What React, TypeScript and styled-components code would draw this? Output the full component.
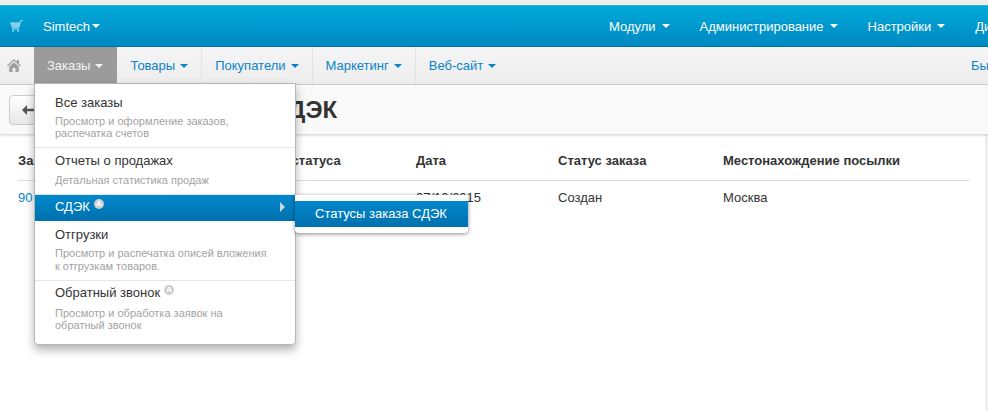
import styled, { createGlobalStyle } from "styled-components";

const GlobalStyle = createGlobalStyle`
  html, body {
    margin: 0;
    height: 100%;
    overflow: hidden;
    background: #ffffff;
  }
  body {
    font-family: "Liberation Sans", Arial, sans-serif;
    font-size: 13px;
    color: #333333;
  }
`;

const Page = styled.div`
  width: 988px;
  height: 411px;
  overflow: hidden;
  position: relative;
  padding-top: 5px;
  box-sizing: border-box;
  display: flex;
  flex-direction: column;
  background: linear-gradient(#f1efed 5px, #ffffff 5px);
`;

const TopBar = styled.div`
  height: 42px;
  flex: none;
  display: flex;
  align-items: center;
  justify-content: space-between;
  background: linear-gradient(#00a9d9, #0089c3);
  border-top: 1px solid #3bb0d0;
  border-bottom: 1px solid #00719f;
  box-sizing: border-box;
  white-space: nowrap;
`;

const TopLeft = styled.div`
  display: flex;
  align-items: center;
  padding-left: 10px;
`;

const TopRight = styled.div`
  display: flex;
  align-items: center;
  gap: 30px;
  width: 379px;
  flex: none;
  overflow: hidden;
`;

const TopLink = styled.span<{ $gap?: number }>`
  color: #ffffff;
  font-size: 13px;
  display: inline-flex;
  align-items: center;
  gap: ${(p) => p.$gap ?? 6}px;
  text-shadow: 0 -1px 0 rgba(0, 0, 0, 0.1);
`;

const Brand = styled(TopLink)`
  margin-left: 20px;
`;

const Caret = styled.i<{ $color?: string }>`
  display: inline-block;
  width: 0;
  height: 0;
  border-left: 4px solid transparent;
  border-right: 4px solid transparent;
  border-top: 4px solid ${(p) => p.$color ?? "#ffffff"};
`;

const SubBar = styled.div`
  height: 38px;
  flex: none;
  display: flex;
  align-items: stretch;
  background: linear-gradient(#f5f5f5, #ededed);
  border-bottom: 1px solid #d5d5d5;
  box-sizing: border-box;
  white-space: nowrap;
`;

const HomeCell = styled.div`
  width: 34px;
  flex: none;
  display: flex;
  align-items: center;
  padding-left: 7px;
  box-sizing: border-box;
`;

const SubItem = styled.div<{ $active?: boolean }>`
  display: flex;
  align-items: center;
  gap: 5px;
  padding: 0 13px;
  font-size: 13px;
  color: ${(p) => (p.$active ? "#f4f4f4" : "#0b84c7")};
  background: ${(p) => (p.$active ? "#9b9b9b" : "transparent")};
  border-right: 1px solid ${(p) => (p.$active ? "#9b9b9b" : "#e2e2e2")};
  height: 37px;

  &:nth-last-child(2) {
    border-right-color: transparent;
  }
`;

const SubRight = styled.div`
  margin-left: auto;
  width: 17px;
  overflow: hidden;
  display: flex;
  align-items: center;
  color: #0b84c7;
  font-size: 13px;
`;

const TitleBar = styled.div`
  height: 49px;
  flex: none;
  display: flex;
  align-items: center;
  background: #f9f9f9;
  box-shadow: 0 1px 3px rgba(0, 0, 0, 0.22);
  padding-left: 9px;
  position: relative;
  white-space: nowrap;
`;

const BackButton = styled.div`
  width: 50px;
  height: 30px;
  margin-top: 1px;
  border: 1px solid #cccccc;
  border-radius: 4px;
  background: linear-gradient(#ffffff, #e8e8e8);
  display: flex;
  align-items: center;
  padding-left: 12px;
  box-sizing: border-box;
`;

const Title = styled.h1`
  margin: 0 0 0 22px;
  font-size: 24px;
  font-weight: 700;
  color: #333333;
  line-height: 30px;
`;

const Content = styled.div`
  flex: 1;
  padding: 17px 15px 0 18px;
  border-right: 3px solid #f0f0f0;
`;

const Table = styled.div`
  display: grid;
  grid-template-columns: 246px 152px 142px 165px 1fr;
`;

const HeadCell = styled.div`
  height: 29px;
  font-size: 13px;
  font-weight: 700;
  line-height: 20px;
  border-bottom: 1px solid #dddddd;
  color: #333333;
  white-space: nowrap;
`;

const Cell = styled.div<{ $link?: boolean }>`
  padding-top: 8px;
  font-size: 13px;
  line-height: 18px;
  color: ${(p) => (p.$link ? "#0b84c7" : "#333333")};
`;

const Menu = styled.div`
  position: absolute;
  left: 34px;
  top: 83px;
  width: 262px;
  height: 262px;
  background: #ffffff;
  border: 1px solid #b5b5b5;
  border-radius: 0 0 4px 4px;
  box-sizing: border-box;
  box-shadow: 0 5px 10px rgba(0, 0, 0, 0.3);
  display: flex;
  flex-direction: column;
  z-index: 5;
`;

const MenuItem = styled.div<{ $height: number; $top?: number; $line?: boolean }>`
  height: ${(p) => p.$height}px;
  flex: none;
  box-sizing: border-box;
  padding: ${(p) => p.$top ?? 3}px 20px 0;
  border-top: ${(p) => (p.$line ? "1px solid #e5e5e5" : "none")};
`;

const ActiveItem = styled.div`
  height: 27px;
  flex: none;
  box-sizing: border-box;
  padding: 3px 10px 0 20px;
  display: flex;
  justify-content: space-between;
  background: linear-gradient(#0088cc, #0070ae);
  border-top: 1px solid #e5e5e5;
  color: #ffffff;
`;

const ItemTitle = styled.div<{ $inverse?: boolean }>`
  font-size: 13px;
  line-height: 18px;
  color: ${(p) => (p.$inverse ? "#ffffff" : "#333333")};
  display: flex;
  align-items: flex-start;
  gap: 4px;
`;

const ItemNote = styled.div<{ $top?: number; $leading?: number }>`
  margin-top: ${(p) => p.$top ?? 3}px;
  font-size: 11px;
  line-height: ${(p) => p.$leading ?? 12}px;
  color: #a3a3a3;
`;

const Badge = styled.span`
  width: 10px;
  height: 10px;
  margin-top: 1px;
  border-radius: 50%;
  background: #cfcfcf;
  color: #ffffff;
  font-size: 8px;
  font-weight: 700;
  line-height: 10px;
  text-align: center;
`;

const SideArrow = styled.i`
  width: 0;
  height: 0;
  margin-top: 4px;
  border-top: 5px solid transparent;
  border-bottom: 5px solid transparent;
  border-left: 5px solid #c9d6de;
`;

const SubMenu = styled.div`
  position: absolute;
  left: 295px;
  top: 195px;
  width: 173px;
  height: 38px;
  padding: 6px 0;
  box-sizing: border-box;
  background: #ffffff;
  border-radius: 0 0 4px 4px;
  box-shadow: 0 1px 4px rgba(0, 0, 0, 0.45);
  z-index: 6;
`;

const SubMenuRow = styled.div`
  height: 26px;
  padding-left: 20px;
  line-height: 25px;
  font-size: 13px;
  color: #ffffff;
  background: linear-gradient(#0088cc, #0070ae);
  white-space: nowrap;
`;

const CartIcon = () => (
  <svg width="13" height="12" viewBox="0 0 13 12">
    <path
      d="M0 2.2h9.6L10.4 0H13v1h-1.8L9.2 8.4H2L0 2.2z"
      fill="#7fd0ea"
    />
    <path d="M2 9.2h7v.8H2z" fill="#7fd0ea" />
    <circle cx="3" cy="11" r="1" fill="#7fd0ea" />
    <circle cx="8" cy="11" r="1" fill="#7fd0ea" />
  </svg>
);

const HomeIcon = () => (
  <svg width="14" height="13" viewBox="0 0 14 13">
    <path
      d="M7 0l3 2.8V1h2v3.7L14 6.6l-.8.9L7 1.8.8 7.5 0 6.6zM2.2 7.6 7 3.2l4.8 4.4V13H8.4V9H5.6v4H2.2z"
      fill="#a0a0a0"
    />
  </svg>
);

const BackIcon = () => (
  <svg width="14" height="10" viewBox="0 0 14 10">
    <path d="M5 0v3.8h9v2.4H5V10L0 5z" fill="#555555" />
  </svg>
);

const topLinks = ["Модули", "Администрирование", "Настройки", "Дизайн"];
const subLinks = ["Товары", "Покупатели", "Маркетинг", "Веб-сайт"];

export default function App() {
  return (
    <>
      <GlobalStyle />
      <Page>
        <TopBar>
          <TopLeft>
            <CartIcon />
            <Brand $gap={2}>
              Simtech <Caret />
            </Brand>
          </TopLeft>
          <TopRight>
            {topLinks.map((name) => (
              <TopLink key={name}>
                {name} <Caret />
              </TopLink>
            ))}
          </TopRight>
        </TopBar>

        <SubBar>
          <HomeCell>
            <HomeIcon />
          </HomeCell>
          <SubItem $active>
            Заказы <Caret $color="#f4f4f4" />
          </SubItem>
          {subLinks.map((name) => (
            <SubItem key={name}>
              {name} <Caret $color="#0b84c7" />
            </SubItem>
          ))}
          <SubRight>Быстрое</SubRight>
        </SubBar>

        <TitleBar>
          <BackButton>
            <BackIcon />
          </BackButton>
          <Title>Статусы заказа СДЭК</Title>
        </TitleBar>

        <Content>
          <Table>
            <HeadCell>Заказ</HeadCell>
            <HeadCell>Код статуса</HeadCell>
            <HeadCell>Дата</HeadCell>
            <HeadCell>Статус заказа</HeadCell>
            <HeadCell>Местонахождение посылки</HeadCell>
            <Cell $link>90</Cell>
            <Cell>1</Cell>
            <Cell>07/10/2015</Cell>
            <Cell>Создан</Cell>
            <Cell>Москва</Cell>
          </Table>
        </Content>

        <Menu>
          <MenuItem $height={63} $top={10}>
            <ItemTitle>Все заказы</ItemTitle>
            <ItemNote>
              Просмотр и оформление заказов,
              <br />
              распечатка счетов
            </ItemNote>
          </MenuItem>
          <MenuItem $height={47} $top={4} $line>
            <ItemTitle>Отчеты о продажах</ItemTitle>
            <ItemNote $top={4}>Детальная статистика продаж</ItemNote>
          </MenuItem>
          <ActiveItem>
            <ItemTitle $inverse>
              СДЭК <Badge>A</Badge>
            </ItemTitle>
            <SideArrow />
          </ActiveItem>
          <MenuItem $height={59} $top={5}>
            <ItemTitle>Отгрузки</ItemTitle>
            <ItemNote $leading={13}>
              Просмотр и распечатка описей вложения
              <br />к отгрузкам товаров.
            </ItemNote>
          </MenuItem>
          <MenuItem $height={64} $line>
            <ItemTitle>
              Обратный звонок <Badge>A</Badge>
            </ItemTitle>
            <ItemNote $top={5}>
              Просмотр и обработка заявок на
              <br />
              обратный звонок
            </ItemNote>
          </MenuItem>
        </Menu>

        <SubMenu>
          <SubMenuRow>Статусы заказа СДЭК</SubMenuRow>
        </SubMenu>
      </Page>
    </>
  );
}
